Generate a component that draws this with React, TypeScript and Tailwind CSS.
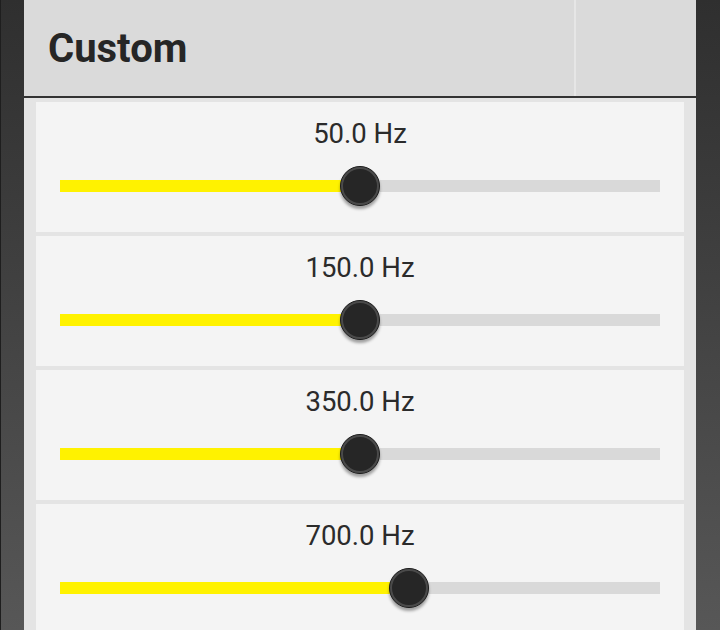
const bands = [
  { label: "50.0 Hz", pct: 50 },
  { label: "150.0 Hz", pct: 50 },
  { label: "350.0 Hz", pct: 50 },
  { label: "700.0 Hz", pct: 58.2 },
];

function BandCard({ label, pct }: { label: string; pct: number }) {
  return (
    <div className="h-[130px] shrink-0 bg-[#f4f4f4] px-6 pt-4">
      <div className="h-8 text-center text-[27.5px] leading-8 text-[#2b2b2b]">{label}</div>
      <div className="relative mt-4 flex h-10 items-center">
        <div className="flex h-3 w-full">
          <div className="h-full bg-[#fff200]" style={{ width: `${pct}%` }} />
          <div className="h-full flex-1 bg-[#d9d9d9]" />
        </div>
        <div
          className="absolute top-0 h-10 w-10 -translate-x-1/2 rounded-full border border-[#1c1c1c] bg-[#262626] shadow-[0_3px_3px_rgba(0,0,0,0.35)]"
          style={{ left: `${pct}%` }}
        >
          <div className="h-full w-full rounded-full border-2 border-[#4a4a4a] bg-[#262626]" />
        </div>
      </div>
    </div>
  );
}

export default function App() {
  return (
    <div className="flex h-[630px] w-[720px] overflow-hidden font-['Roboto',sans-serif]">
      <div className="w-6 shrink-0 border-l border-[#1e1e1e] bg-gradient-to-b from-[#2f2f2f] to-[#575757]" />
      <div className="flex flex-1 flex-col bg-[#e4e4e4]">
        <div className="flex h-[98px] shrink-0 border-b-2 border-[#333] bg-[#dadada]">
          <div className="flex flex-1 items-center pl-[24px] pt-[1px] text-[40px] font-bold text-[#262626]">
            Custom
          </div>
          <div className="w-[2px] bg-[#e6e6e6]" />
          <div className="w-[120px]" />
        </div>
        <div className="flex flex-col gap-1 px-3 pt-1">
          {bands.map((b) => (
            <BandCard key={b.label} label={b.label} pct={b.pct} />
          ))}
        </div>
      </div>
      <div className="w-6 shrink-0 bg-gradient-to-b from-[#2f2f2f] to-[#575757]" />
    </div>
  );
}
